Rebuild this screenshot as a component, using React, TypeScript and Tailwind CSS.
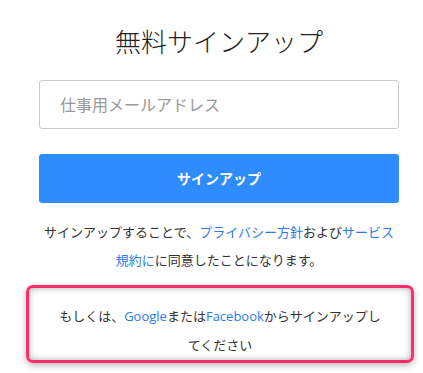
export default function App() {
  return (
    <div className="min-h-screen bg-white pl-[39px] pt-[25px] font-['Open_Sans','Noto_Sans_CJK_JP',sans-serif] text-[#333]">
      <div className="flex w-[360px] flex-col">
        {/* タイトル */}
        <h1 className="text-center text-[26px] font-light leading-[34px] text-[#222]">無料サインアップ</h1>

        {/* メールアドレス入力 */}
        <input
          type="email"
          placeholder="仕事用メールアドレス"
          className="mt-[21px] h-[49px] w-full rounded-[3px] border border-[#cccccc] px-[20px] text-[16px] placeholder:text-[#999] outline-none"
        />

        <button className="mt-[25px] h-[49px] w-full rounded-[3px] bg-[#2f8cff] text-[14px] font-bold text-white">
          サインアップ
        </button>

        <p className="mt-[15px] text-center text-[13px] leading-[28px]">
          サインアップすることで、<span className="text-[#2c7be5]">プライバシー方針</span>および
          <span className="text-[#2c7be5]">サービス規約に</span>に同意したことになります。
        </p>

        {/* 注記ボックス */}
        <div className="ml-[-13px] mt-[11px] h-[78px] w-[388px] rounded-[7px] border-[3px] border-[#ff2d6b] px-[28px] pt-[14px] text-center text-[13px] leading-[29px] shadow-[inset_0_0_6px_rgba(0,0,0,0.35),0_2px_6px_rgba(0,0,0,0.3)]">
          もしくは、<span className="text-[#2c7be5]">Google</span>または
          <span className="text-[#2c7be5]">Facebook</span>からサインアップしてください
        </div>
      </div>
    </div>
  );
}
